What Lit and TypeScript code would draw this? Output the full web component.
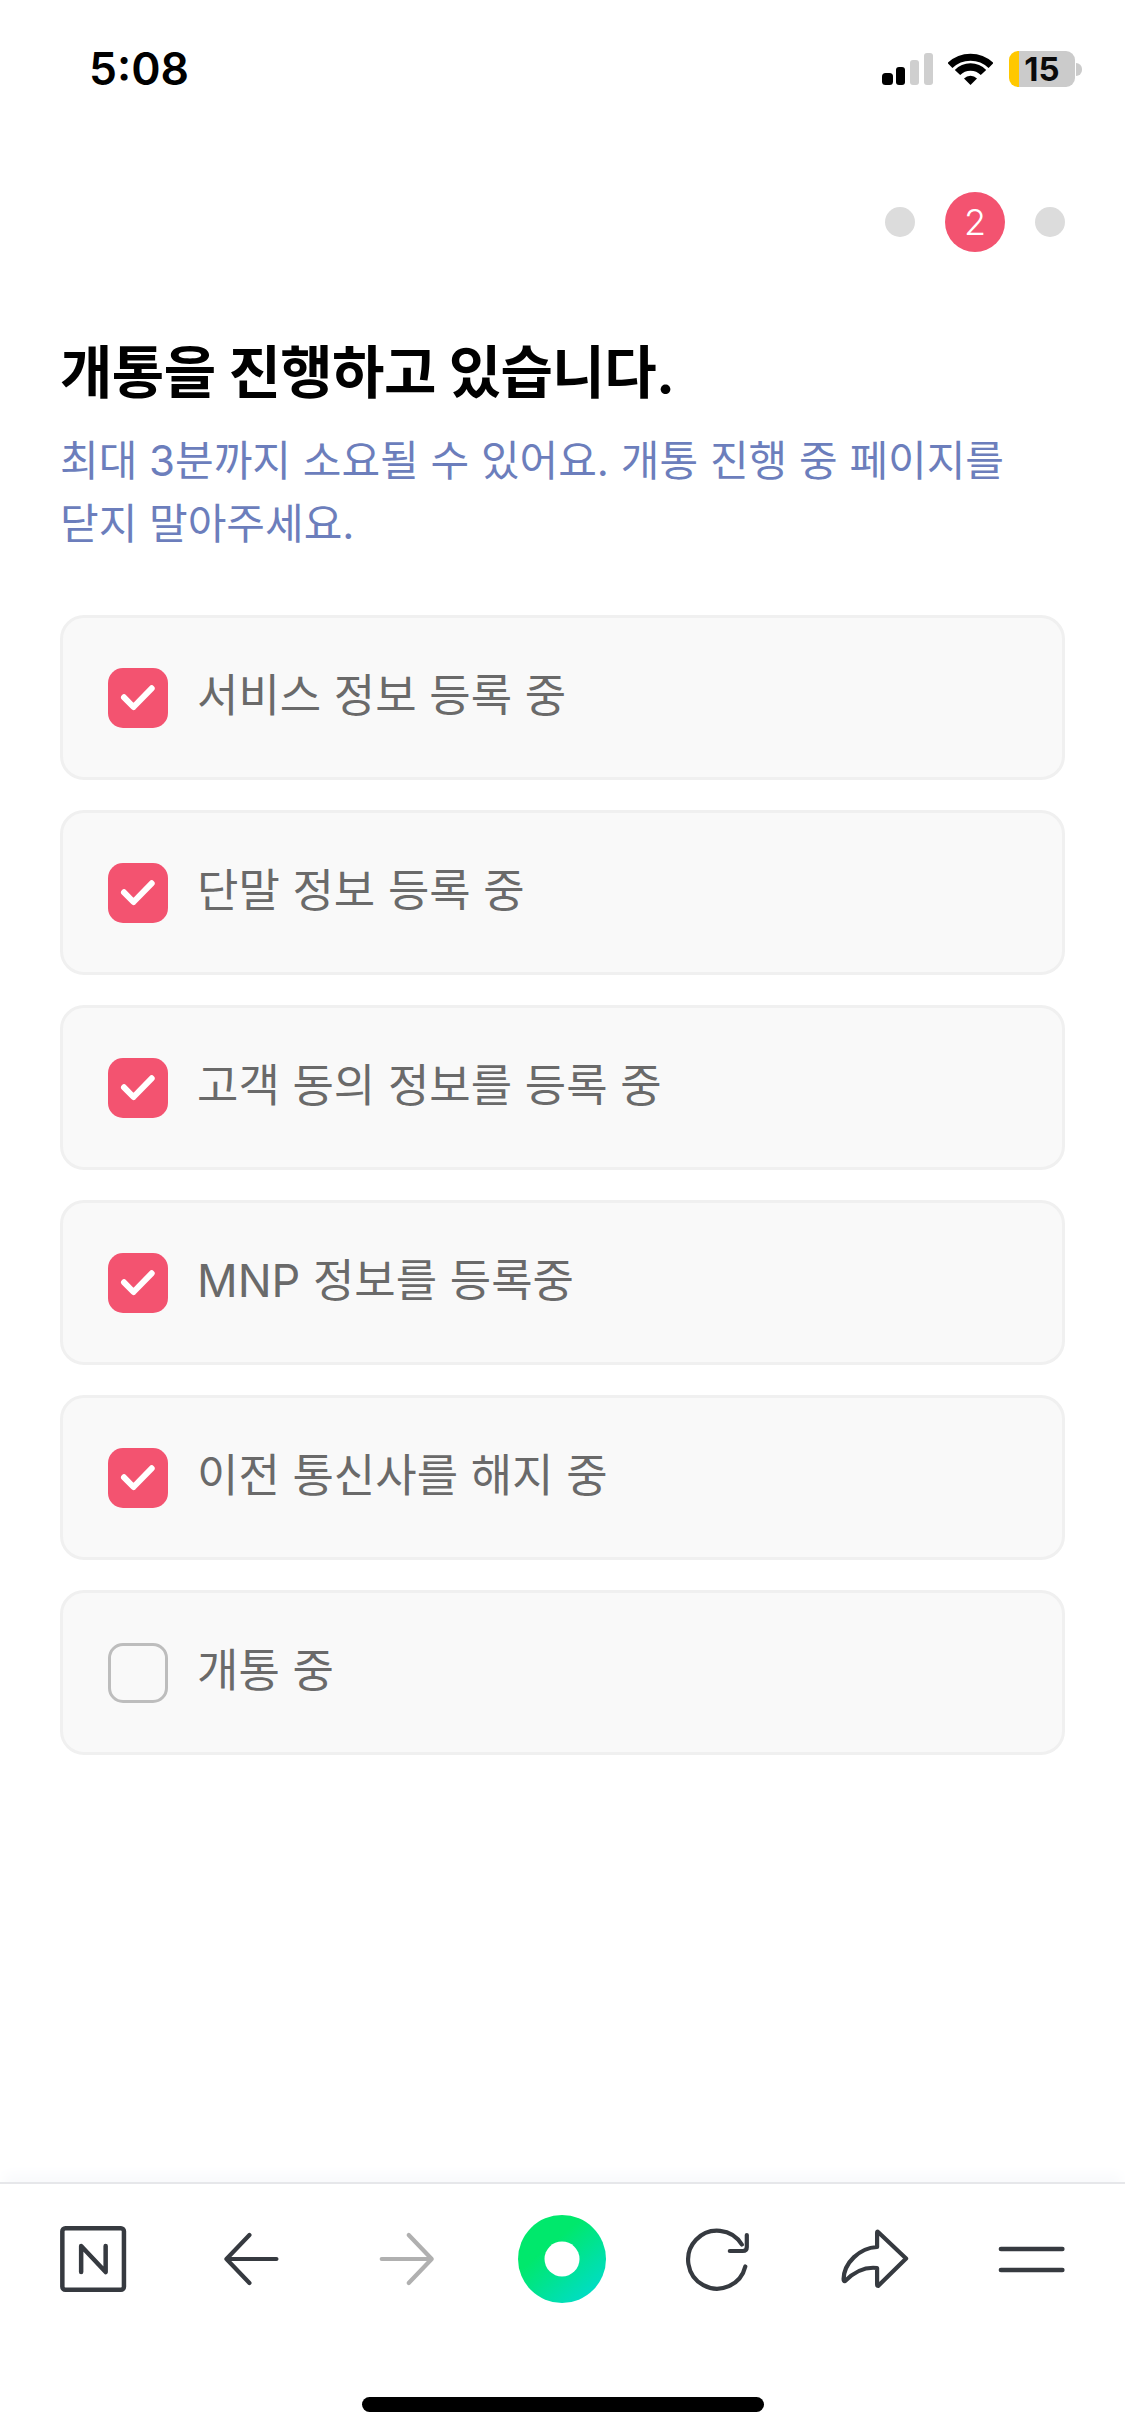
import { LitElement, html, css, svg } from "lit";
import { customElement } from "lit/decorators.js";

const STEPS = [
  { label: "서비스 정보 등록 중", done: true },
  { label: "단말 정보 등록 중", done: true },
  { label: "고객 동의 정보를 등록 중", done: true },
  { label: "MNP 정보를 등록중", done: true },
  { label: "이전 통신사를 해지 중", done: true },
  { label: "개통 중", done: false },
];

const INK = "#363a40";
const TOOLS = [
  svg`<rect x="62.2" y="2228.2" width="61.6" height="61.6" rx="3" fill="none" stroke="${INK}" stroke-width="4.5"/><path d="M81 2272V2246L105.5 2272V2246" fill="none" stroke="${INK}" stroke-width="4.5" stroke-linecap="round" stroke-linejoin="round"/>`,
  svg`<path d="M276 2259H226M249 2235L226 2259L249 2283" fill="none" stroke="${INK}" stroke-width="4.2" stroke-linecap="round" stroke-linejoin="round"/>`,
  svg`<path d="M382 2259H432M409 2235L432 2259L409 2283" fill="none" stroke="#b0b0b0" stroke-width="4.2" stroke-linecap="round" stroke-linejoin="round"/>`,
  svg`<defs><linearGradient id="g" x1="0.35" y1="0.35" x2="0.85" y2="0.95"><stop offset="0" stop-color="#00e86c"/><stop offset="1" stop-color="#00dccb"/></linearGradient></defs><circle cx="562" cy="2259" r="44" fill="url(#g)"/><circle cx="562" cy="2259" r="17.5" fill="#fff"/>`,
  svg`<path d="M745 2266.5A29 29 0 1 1 741.5 2244.5M746.5 2235V2247Q746.5 2251 742.5 2251H729.5" fill="none" stroke="${INK}" stroke-width="4.2" stroke-linecap="round" stroke-linejoin="round"/>`,
  svg`<path d="M878.5 2232L906.5 2258.5L878.5 2286Q877.5 2286 877.5 2284V2268Q860.5 2266 845.5 2281Q844 2281.5 844 2279C844.5 2263 859.5 2248 877.5 2247V2233Q877.5 2231 878.5 2232Z" fill="none" stroke="${INK}" stroke-width="4.2" stroke-linecap="round" stroke-linejoin="round"/>`,
  svg`<path d="M1001 2249H1062.5M1001 2270H1062.5" fill="none" stroke="${INK}" stroke-width="4.5" stroke-linecap="round"/>`,
];

@customElement("app-root")
export class AppRoot extends LitElement {
  static styles = css`
    :host {
      display: block;
      width: 1125px;
      height: 2436px;
      background: #fff;
      font-family: Inter, "Noto Sans CJK KR", sans-serif;
    }
    .page { display: flex; flex-direction: column; height: 2436px; box-sizing: border-box; }
    .status {
      height: 136px; box-sizing: border-box; padding: 0 43px 0 89px;
      display: flex; justify-content: space-between; align-items: flex-start;
    }
    .time {
      font: 600 44.5px/56px Inter, "Liberation Sans", sans-serif;
      color: #000; margin-top: 41px;
    }
    .indicators { display: flex; align-items: flex-start; margin-top: 51px; }
    .signal { width: 51px; height: 36px; margin-right: 15px; display: block; }
    .wifi { width: 45px; height: 36px; margin-right: 16px; display: block; }
    .battery { display: flex; width: 73px; height: 36px; }
    .cell {
      width: 66px; height: 36px; border-radius: 9px;
      background: linear-gradient(90deg, #ffc800 0 10px, #cbcbcb 10px);
      display: flex; align-items: center; justify-content: center;
      font: 700 33px/36px Inter, "Liberation Sans", sans-serif; color: #0a0a0a;
    }
    .nub { width: 6px; height: 13px; margin: 12px 0 0 1px; background: #cbcbcb; border-radius: 0 7px 7px 0; }

    .stepper { display: flex; justify-content: flex-end; align-items: center; gap: 30px; padding: 56px 60px 0 0; }
    .dot { width: 30px; height: 30px; border-radius: 50%; background: #dcdcdc; }
    .dot.on {
      width: 60px; height: 60px; background: #f35370; color: #fff;
      display: flex; align-items: center; justify-content: center;
      font: 300 36px/60px Inter, sans-serif;
    }
    h1 { margin: 0; padding: 79px 60px 0; font-size: 57px; line-height: 84px; font-weight: 700; color: #000; letter-spacing: -0.6px; }
    .sub { margin: 0; padding: 14px 60px 0; font-size: 42px; line-height: 63px; font-weight: 400; color: #6c7ebc; }
    .cards { display: flex; flex-direction: column; gap: 30px; padding: 60px 60px 0; }
    .card {
      height: 165px; box-sizing: border-box; border: 3px solid #f0f0f0; border-radius: 24px; background: #f9f9f9;
      display: flex; align-items: center; gap: 29px; padding: 0 0 0 45px;
    }
    .box { width: 60px; height: 60px; box-sizing: border-box; border-radius: 15px; flex: none; }
    .box.on { background: #f35370; }
    .box.off { border: 3.5px solid #bdbdbd; }
    .box svg { display: block; width: 60px; height: 60px; }
    .label { font-size: 45px; line-height: 60px; font-weight: 400; color: #6a6a6a; position: relative; top: -2px; }
    .toolbar {
      margin-top: auto; border-top: 2px solid #e6e7ea;
      box-shadow: 0 -12px 12px -4px #f9fafc;
      display: grid; grid-template-columns: repeat(7, 1fr);
      padding: 25px 20px 0 15px; height: 215px; box-sizing: border-box;
    }
    .toolbar svg { display: block; width: 100px; height: 100px; justify-self: center; }
    .homebar { width: 402px; height: 15px; border-radius: 8px; background: #000; margin: 0 0 24px 362px; }
  `;

  render() {
    return html`<div class="page">
      <div class="status">
        <div class="time">5:08</div>
        <div class="indicators">
          <svg class="signal" viewBox="0 0 51 36">
            <rect x="0" y="22" width="11" height="12" rx="3.5" fill="#000"/>
            <rect x="14" y="16" width="9" height="18" rx="3" fill="#000"/>
            <rect x="28" y="9" width="9" height="25" rx="3" fill="#cfcfcf"/>
            <rect x="42" y="2" width="9" height="32" rx="3" fill="#cfcfcf"/>
          </svg>
          <svg class="wifi" viewBox="0 0 45 36">
            <path d="M2 14.5A29.5 29.5 0 0 1 43 14.5" fill="none" stroke="#000" stroke-width="7"/>
            <path d="M9.5 21.5A18 18 0 0 1 35.5 21.5" fill="none" stroke="#000" stroke-width="7.5"/>
            <path d="M22.5 34L16 27.5A9.2 9.2 0 0 1 29 27.5Z" fill="#000"/>
          </svg>
          <div class="battery"><div class="cell">15</div><div class="nub"></div></div>
        </div>
      </div>
      <div class="stepper">
        <div class="dot"></div>
        <div class="dot on">2</div>
        <div class="dot"></div>
      </div>
      <h1>개통을 진행하고 있습니다.</h1>
      <p class="sub">최대 3분까지 소요될 수 있어요. 개통 진행 중 페이지를<br />닫지 말아주세요.</p>
      <div class="cards">
        ${STEPS.map(
          (s) => html`<div class="card">
            ${s.done
              ? html`<div class="box on"><svg viewBox="0 0 60 60"><path d="M16 29.3L25.5 39L43.7 20.3" fill="none" stroke="#fff" stroke-width="6" stroke-linecap="round" stroke-linejoin="round"/></svg></div>`
              : html`<div class="box off"></div>`}
            <div class="label">${s.label}</div>
          </div>`
        )}
      </div>
      <div class="toolbar">
        ${TOOLS.map((t, i) => {
          const cx = 15 + 155.71 * (i + 0.5);
          return html`<svg viewBox="${cx - 50} 2209 100 100">${t}</svg>`;
        })}
      </div>
      <div class="homebar"></div>
    </div>`;
  }
}
